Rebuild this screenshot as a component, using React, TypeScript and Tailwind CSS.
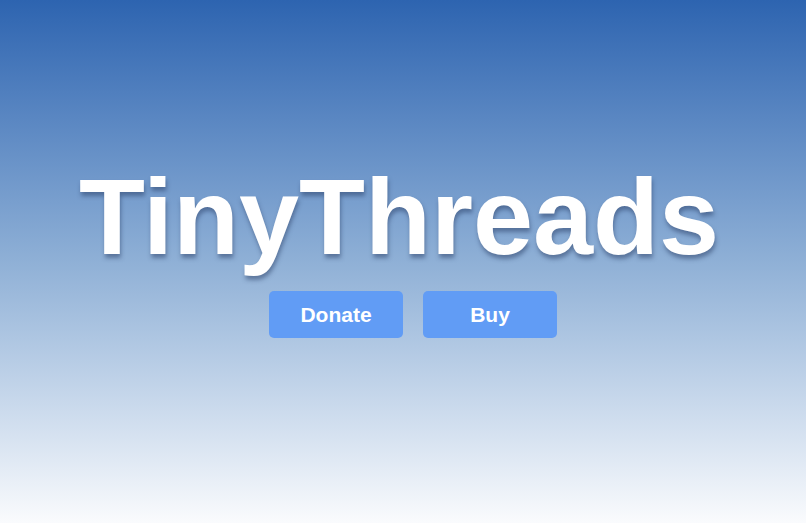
export default function App() {
  return (
    <div
      className="w-[806px] h-[523px] flex flex-col items-center bg-gradient-to-b from-[#2d64b0] via-[#8fb0d6] to-[#fafbfd] overflow-hidden"
      style={{ fontFamily: '"Liberation Sans", Arial, sans-serif' }}
    >
      {/* Title */}
      <h1 className="mt-[153px] mr-[8px] text-[108px] leading-[128px] font-bold text-white [text-shadow:1px_4px_4px_rgba(40,60,100,0.5)]">
        TinyThreads
      </h1>

      {/* Actions */}
      <div className="mt-[10px] ml-[20px] flex gap-5">
        <button className="w-[134px] h-[47px] rounded-[5px] bg-[#619cf5] text-white text-[21px] font-bold">
          Donate
        </button>
        <button className="w-[134px] h-[47px] rounded-[5px] bg-[#619cf5] text-white text-[21px] font-bold">
          Buy
        </button>
      </div>
    </div>
  )
}
